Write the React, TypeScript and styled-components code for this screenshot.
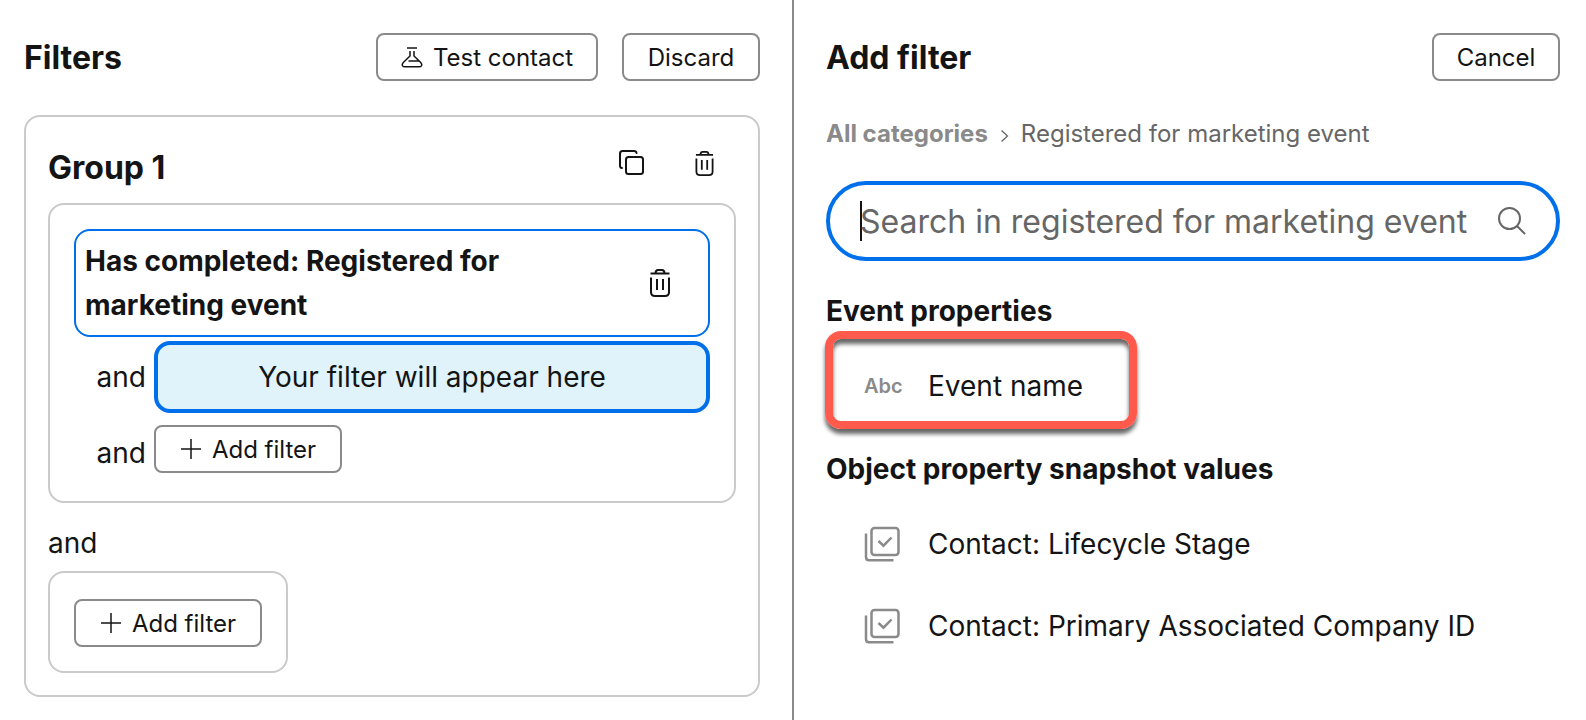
import React from 'react';
import styled, { createGlobalStyle } from 'styled-components';

const ink = '#141414';
const blue = '#0070ea';
const line = '#cacaca';
const control = '#8a8a8a';
const muted = '#666666';

const GlobalStyle = createGlobalStyle`
  *, *::before, *::after { box-sizing: border-box; }
  body {
    margin: 0;
    background: #fff;
    color: ${ink};
    font-family: Inter, "Liberation Sans", sans-serif;
    font-size: 28px;
    font-weight: 400;
  }
  button, input { font: inherit; color: inherit; }
`;

const Page = styled.main`
  display: flex;
  min-height: 100vh;
`;

const FiltersPane = styled.section`
  width: calc(50% + 1px);
  padding: 33px 32px 23px 24px;
  border-right: 2px solid ${control};
`;

const AddPane = styled.section`
  flex: 1;
  min-width: 0;
  padding: 33px 26px 23px 32px;
`;

const PaneHeader = styled.header`
  display: flex;
  align-items: flex-start;
  justify-content: space-between;
  height: 48px;
`;

const PaneTitle = styled.h1`
  margin: 0;
  font-size: 32px;
  line-height: 50px;
  font-weight: 700;
`;

const Actions = styled.div`
  display: flex;
  gap: 24px;
`;

const Button = styled.button<{ $width: number }>`
  display: inline-flex;
  align-items: center;
  justify-content: center;
  gap: 10px;
  height: 48px;
  min-width: ${(p) => p.$width}px;
  padding: 2px 20px 0;
  border: 2px solid ${control};
  border-radius: 8px;
  background: #fff;
  font-size: 24px;
  line-height: 32px;
  white-space: nowrap;
  cursor: pointer;
`;

const IconButton = styled.button`
  display: inline-flex;
  flex: none;
  align-items: center;
  justify-content: center;
  width: 40px;
  height: 40px;
  padding: 0;
  border: 0;
  background: none;
  cursor: pointer;
`;

const Group = styled.section`
  margin-top: 34px;
  padding: 0 22px 22px;
  border: 2px solid ${line};
  border-radius: 16px;
`;

const GroupHeader = styled.div`
  display: flex;
  align-items: flex-start;
  justify-content: space-between;
  padding: 26px 12px 10px 0;
`;

const GroupTitle = styled.h2`
  margin: 0;
  font-size: 32px;
  line-height: 50px;
  font-weight: 700;
`;

const GroupActions = styled.div`
  display: flex;
  gap: 32px;
`;

const FilterSet = styled.div`
  padding: 24px 24px 20px;
  border: 2px solid ${line};
  border-radius: 16px;
`;

const ActiveFilter = styled.div`
  display: flex;
  align-items: center;
  justify-content: space-between;
  padding: 8px 28px 8px 9px;
  border: 2px solid ${blue};
  border-radius: 16px;
`;

const FilterText = styled.p`
  max-width: 440px;
  margin: 0;
  line-height: 44px;
  font-weight: 700;
`;

const ConditionRow = styled.div<{ $center?: boolean; $gap: number }>`
  display: flex;
  align-items: ${(p) => (p.$center ? 'center' : 'flex-start')};
  margin-top: ${(p) => p.$gap}px;
`;

const RowLabel = styled.span`
  flex: none;
  width: 80px;
  padding-right: 8px;
  text-align: right;
  line-height: 56px;
`;

const Placeholder = styled.div`
  flex: 1;
  padding: 12px;
  border: 4px solid ${blue};
  border-radius: 16px;
  background: #e0f3fb;
  text-align: center;
  line-height: 40px;
`;

const Joiner = styled.p`
  margin: 20px 0 8px;
  line-height: 40px;
`;

const NewSet = styled.div`
  width: fit-content;
  padding: 26px 24px 24px;
  border: 2px solid ${line};
  border-radius: 16px;
`;

const Breadcrumb = styled.nav`
  display: flex;
  align-items: center;
  margin-top: 35px;
  color: ${muted};
  font-size: 24px;
  line-height: 36px;
  white-space: nowrap;
`;

const CrumbLink = styled.a`
  color: ${control};
  font-weight: 700;
  text-decoration: none;
`;

const Chevron = styled.svg`
  flex: none;
  margin: 3px 12px 0;
`;

const SearchBox = styled.div`
  display: flex;
  align-items: center;
  height: 80px;
  margin-top: 29px;
  padding: 0 30px;
  border: 4px solid ${blue};
  border-radius: 40px;
  color: ${muted};
`;

const Caret = styled.span`
  flex: none;
  width: 2px;
  height: 40px;
  margin-right: -2px;
  background: ${ink};
`;

const SearchInput = styled.input`
  flex: 1;
  min-width: 0;
  padding: 2px 0 0;
  border: 0;
  outline: 0;
  background: none;
  font-size: 32px;
  line-height: 40px;
  &::placeholder { color: ${muted}; opacity: 1; }
`;

const PropertySection = styled.section<{ $gap: number }>`
  margin-top: ${(p) => p.$gap}px;
`;

const SectionTitle = styled.h2`
  margin: 0 0 15px;
  font-size: 28px;
  line-height: 40px;
  font-weight: 700;
`;

const PropertyList = styled.ul`
  margin: 0;
  padding: 0;
  list-style: none;
`;

const PropertyItem = styled.li`
  position: relative;
  width: fit-content;
`;

const PropertyButton = styled.button`
  display: flex;
  align-items: center;
  height: 82px;
  padding: 0 54px 2px 38px;
  border: 0;
  background: none;
  text-align: left;
  line-height: 40px;
  white-space: nowrap;
  cursor: pointer;
`;

const TypeIcon = styled.span`
  display: flex;
  flex: none;
  align-items: center;
  width: 64px;
  color: ${control};
  font-size: 20px;
  font-weight: 600;
`;

const Highlight = styled.span`
  position: absolute;
  inset: -15px -1px -1px;
  width: 312px;
  border: 8px solid #ff5a4c;
  border-radius: 16px;
  box-shadow: 0 5px 4px rgba(0, 0, 0, 0.6), inset 0 5px 4px rgba(0, 0, 0, 0.6);
  pointer-events: none;
`;

function FlaskIcon() {
  return (
    <svg width="22" height="22" viewBox="0 0 22 22" fill="none" stroke="currentColor" strokeWidth="1.5" aria-hidden="true">
      <path d="M6 1h10M9 4v5L2.300 15.400C.3 17.600 1.300 19.800 4 19.800h14c2.700 0 3.700-2.200 1.700-4.400L13 9V4M7.500 14h10.500" />
    </svg>
  );
}

function CopyIcon() {
  return (
    <svg width="26" height="26" viewBox="0 0 26 26" fill="none" stroke="currentColor" strokeWidth="2" strokeLinecap="round" aria-hidden="true">
      <rect x="7" y="7" width="17" height="17" rx="2.500" />
      <path d="M3 18C1.500 18 1 17 1 15.500V3.500C1 1.800 1.800 1 3.500 1H15c1.500 0 2.300.4 2.500 2" />
    </svg>
  );
}

function TrashIcon({ size }: { size: number }) {
  return (
    <svg width={size} height={size} viewBox="0 0 30 30" fill="none" stroke="currentColor" strokeWidth="2" aria-hidden="true">
      <path d="M5.500 5.500h19M10.500 5.500c0-2.600 1-3.500 2.500-3.500h4c1.500 0 2.500.9 2.500 3.500M6 9.500V24c0 3 1.200 4 4 4h10c2.800 0 4-1 4-4V9.500M12 11v11M18 11v11" />
    </svg>
  );
}

function PlusIcon() {
  return (
    <svg width="22" height="22" viewBox="0 0 22 22" fill="none" stroke="currentColor" strokeWidth="1.500" aria-hidden="true">
      <path d="M11 0v20M1 10h20" />
    </svg>
  );
}

function SearchIcon() {
  return (
    <svg width="28" height="28" viewBox="0 0 28 28" fill="none" stroke="currentColor" strokeWidth="2" aria-hidden="true">
      <circle cx="11.500" cy="11.500" r="10.500" />
      <path d="M19 19l8 8" />
    </svg>
  );
}

function MultiCheckIcon() {
  return (
    <svg width="36" height="36" viewBox="0 0 36 36" fill="none" stroke="currentColor" strokeWidth="2.500" aria-hidden="true">
      <rect x="7.500" y="2" width="27" height="27" rx="3" />
      <path d="M2 7.500V31c0 2.300 1 3.300 3 3.300h24.500" />
      <path d="M14.500 15l5 4.700 8-8.200" />
    </svg>
  );
}

function AddFilterButton() {
  return (
    <Button type="button" $width={188}>
      <PlusIcon />
      Add filter
    </Button>
  );
}

export default function App() {
  return (
    <>
      <GlobalStyle />
      <Page>
        <FiltersPane>
          <PaneHeader>
            <PaneTitle>Filters</PaneTitle>
            <Actions>
              <Button type="button" $width={222}>
                <FlaskIcon />
                Test contact
              </Button>
              <Button type="button" $width={138}>Discard</Button>
            </Actions>
          </PaneHeader>
          <Group>
            <GroupHeader>
              <GroupTitle>Group 1</GroupTitle>
              <GroupActions>
                <IconButton type="button" aria-label="Clone group"><CopyIcon /></IconButton>
                <IconButton type="button" aria-label="Delete group"><TrashIcon size={27} /></IconButton>
              </GroupActions>
            </GroupHeader>
            <FilterSet>
              <ActiveFilter>
                <FilterText>Has completed: Registered for marketing event</FilterText>
                <IconButton type="button" aria-label="Delete filter"><TrashIcon size={30} /></IconButton>
              </ActiveFilter>
              <ConditionRow $center $gap={4}>
                <RowLabel>and</RowLabel>
                <Placeholder>Your filter will appear here</Placeholder>
              </ConditionRow>
              <ConditionRow $gap={12}>
                <RowLabel>and</RowLabel>
                <AddFilterButton />
              </ConditionRow>
            </FilterSet>
            <Joiner>and</Joiner>
            <NewSet>
              <AddFilterButton />
            </NewSet>
          </Group>
        </FiltersPane>
        <AddPane>
          <PaneHeader>
            <PaneTitle>Add filter</PaneTitle>
            <Button type="button" $width={128}>Cancel</Button>
          </PaneHeader>
          <Breadcrumb aria-label="Breadcrumb">
            <CrumbLink href="#categories">All categories</CrumbLink>
            <Chevron width="9" height="14" viewBox="0 0 9 14" fill="none" stroke="currentColor" strokeWidth="1.300" aria-hidden="true">
              <path d="M1.500 1.500L7.500 7l-6 5.500" />
            </Chevron>
            <span>Registered for marketing event</span>
          </Breadcrumb>
          <SearchBox>
            <Caret />
            <SearchInput type="text" aria-label="Search" placeholder="Search in registered for marketing event" />
            <SearchIcon />
          </SearchBox>
          <PropertySection $gap={30}>
            <SectionTitle>Event properties</SectionTitle>
            <PropertyList>
              <PropertyItem>
                <PropertyButton type="button">
                  <TypeIcon>Abc</TypeIcon>
                  Event name
                </PropertyButton>
                <Highlight />
              </PropertyItem>
            </PropertyList>
          </PropertySection>
          <PropertySection $gap={21}>
            <SectionTitle>Object property snapshot values</SectionTitle>
            <PropertyList>
              {['Contact: Lifecycle Stage', 'Contact: Primary Associated Company ID'].map((name) => (
                <PropertyItem key={name}>
                  <PropertyButton type="button">
                    <TypeIcon><MultiCheckIcon /></TypeIcon>
                    {name}
                  </PropertyButton>
                </PropertyItem>
              ))}
            </PropertyList>
          </PropertySection>
        </AddPane>
      </Page>
    </>
  );
}
